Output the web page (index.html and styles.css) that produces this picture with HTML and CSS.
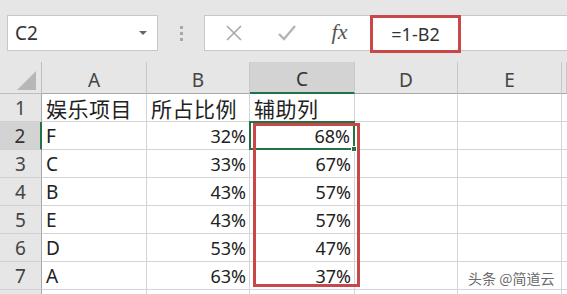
FILE: index.html
```html
<!DOCTYPE html>
<html>
	<head>
		<meta content="width=device-width, initial-scale=1" name="viewport" />
		<link rel="stylesheet" href="styles.css">
	</head>
	<body>
		<div class="toolbar">
			<div class="namebox">
				<span>C2</span>
				<span class="arrow"></span>
			</div>
			<div class="dots"><i></i><i></i><i></i></div>
			<div class="formulabar">
				<div class="btn">
					<svg width="18" height="18" viewBox="0 0 18 18"><path d="M2 2 L16 16 M16 2 L2 16" stroke="#a9a9a9" stroke-width="1.6" fill="none"/></svg>
				</div>
				<div class="btn">
					<svg width="20" height="18" viewBox="0 0 20 18"><path d="M2 10 L7 15 L18 2" stroke="#b5b5b5" stroke-width="2.4" fill="none"/></svg>
				</div>
				<div class="btn fx">fx</div>
				<div class="formula">
					<span class="mark">=1-B2</span>
				</div>
			</div>
		</div>

		<div class="sheet">
			<div class="corner"><span class="tri"></span></div>
			<div class="colhead">A</div>
			<div class="colhead">B</div>
			<div class="colhead sel">C</div>
			<div class="colhead">D</div>
			<div class="colhead">E</div>
			<div class="colhead"></div>

			<div class="rowhead">1</div>
			<div class="cell cn">娱乐项目</div>
			<div class="cell cn">所占比例</div>
			<div class="cell cn">辅助列</div>
			<div class="cell"></div><div class="cell"></div><div class="cell"></div>

			<div class="rowhead sel">2</div>
			<div class="cell">F</div>
			<div class="cell num">32%</div>
			<div class="cell num active">68%<span class="handle"></span></div>
			<div class="cell"></div><div class="cell"></div><div class="cell"></div>

			<div class="rowhead">3</div>
			<div class="cell">C</div>
			<div class="cell num">33%</div>
			<div class="cell num">67%</div>
			<div class="cell"></div><div class="cell"></div><div class="cell"></div>

			<div class="rowhead">4</div>
			<div class="cell">B</div>
			<div class="cell num">43%</div>
			<div class="cell num">57%</div>
			<div class="cell"></div><div class="cell"></div><div class="cell"></div>

			<div class="rowhead">5</div>
			<div class="cell">E</div>
			<div class="cell num">43%</div>
			<div class="cell num">57%</div>
			<div class="cell"></div><div class="cell"></div><div class="cell"></div>

			<div class="rowhead">6</div>
			<div class="cell">D</div>
			<div class="cell num">53%</div>
			<div class="cell num">47%</div>
			<div class="cell"></div><div class="cell"></div><div class="cell"></div>

			<div class="rowhead">7</div>
			<div class="cell">A</div>
			<div class="cell num">63%</div>
			<div class="cell num">37%</div>
			<div class="cell"></div><div class="cell"></div><div class="cell"></div>

			<div class="rowhead"></div>
			<div class="cell"></div><div class="cell"></div><div class="cell"></div>
			<div class="cell"></div><div class="cell"></div><div class="cell"></div>

			<div class="highlight"></div>
			<div class="watermark">头条 @简道云</div>
		</div>
	</body>
</html>
```

FILE: styles.css
```css
* {
	box-sizing: border-box;
}
body {
	margin: 0;
	background-color: #e6e6e6;
	font-family: "Noto Sans", "Noto Sans CJK SC", sans-serif;
	color: #222;
	overflow: hidden;
}

/* top bar */
.toolbar {
	display: flex;
	align-items: center;
	height: 62px;
	padding: 15px 0 11px 7px;
}
.namebox {
	display: flex;
	align-items: center;
	justify-content: space-between;
	width: 151px;
	height: 36px;
	background-color: white;
	border: 1px solid #c8c8c8;
	padding: 0 10px 0 7px;
	font-size: 19px;
	color: #333;
}
.arrow {
	width: 0;
	height: 0;
	border-left: 4px solid transparent;
	border-right: 4px solid transparent;
	border-top: 4px solid #666;
}
.dots {
	display: flex;
	flex-direction: column;
	gap: 3px;
	width: 46px;
	align-items: center;
}
.dots i {
	width: 3px;
	height: 3px;
	background-color: #a8a8a8;
}
.formulabar {
	display: flex;
	align-items: center;
	flex-grow: 1;
	height: 36px;
	background-color: white;
	border: 1px solid #c8c8c8;
	border-right: none;
	padding-left: 2px;
}
.btn {
	display: flex;
	align-items: center;
	justify-content: center;
	width: 53px;
	height: 100%;
}
.fx {
	font-family: "Liberation Serif", serif;
	font-style: italic;
	font-size: 22px;
	color: #555;
	padding-bottom: 2px;
}
.formula {
	flex-grow: 1;
	height: 100%;
	padding-left: 4px;
}
.mark {
	display: flex;
	align-items: center;
	justify-content: center;
	width: 91px;
	height: 38px;
	margin-top: -1px;
	border: 3px solid #c8484a;
	font-size: 18px;
	color: #333;
}

/* grid */
.sheet {
	position: relative;
	display: grid;
	grid-template-columns: 42px 105px 103px 105px 103px 104px 5px;
	grid-template-rows: 32px repeat(8, 28px);
	background-color: white;
}
.corner, .colhead, .rowhead {
	background-color: #e6e6e6;
	color: #444;
	display: flex;
	align-items: center;
	justify-content: center;
}
.corner {
	border-right: 1px solid #bdbdbd;
	border-bottom: 1px solid #bdbdbd;
	justify-content: flex-end;
	align-items: flex-end;
	padding: 0 5px 3px 0;
}
.tri {
	width: 0;
	height: 0;
	border-left: 19px solid transparent;
	border-bottom: 19px solid #b7b7b7;
}
.colhead {
	font-size: 19px;
	border-right: 1px solid #c8c8c8;
	border-bottom: 1px solid #a8a8a8;
	padding-top: 4px;
}
.colhead.sel {
	background-color: #d3d3d3;
	border-bottom: 2px solid #217346;
	color: #333;
}
.rowhead {
	font-size: 19px;
	border-right: 1px solid #a8a8a8;
	border-bottom: 1px solid #d0d0d0;
}
.rowhead.sel {
	background-color: #d3d3d3;
	border-right: 2px solid #217346;
	color: #333;
}
.cell {
	display: flex;
	align-items: center;
	border-right: 1px solid #d4d4d4;
	border-bottom: 1px solid #d4d4d4;
	font-size: 19px;
	padding: 0 3px 0 4px;
	white-space: nowrap;
	color: #222;
}
.cn {
	font-size: 21px;
	letter-spacing: 0.5px;
}
.num {
	justify-content: flex-end;
	font-size: 18px;
}
.active {
	position: relative;
	border: 2px solid #217346;
	margin: -1px 0 0 -1px;
}
.handle {
	position: absolute;
	right: -4px;
	bottom: -4px;
	width: 6px;
	height: 6px;
	background-color: #217346;
	border: 1px solid white;
}
.highlight {
	position: absolute;
	left: 253px;
	top: 61px;
	width: 107px;
	height: 164px;
	border: 3px solid #c8484a;
	pointer-events: none;
}
.watermark {
	position: absolute;
	left: 468px;
	top: 206px;
	font-family: "Noto Sans CJK SC", sans-serif;
	font-size: 14px;
	color: #6a6a6a;
	text-shadow: 1px 1px 0 white, -1px -1px 0 white;
}
```
